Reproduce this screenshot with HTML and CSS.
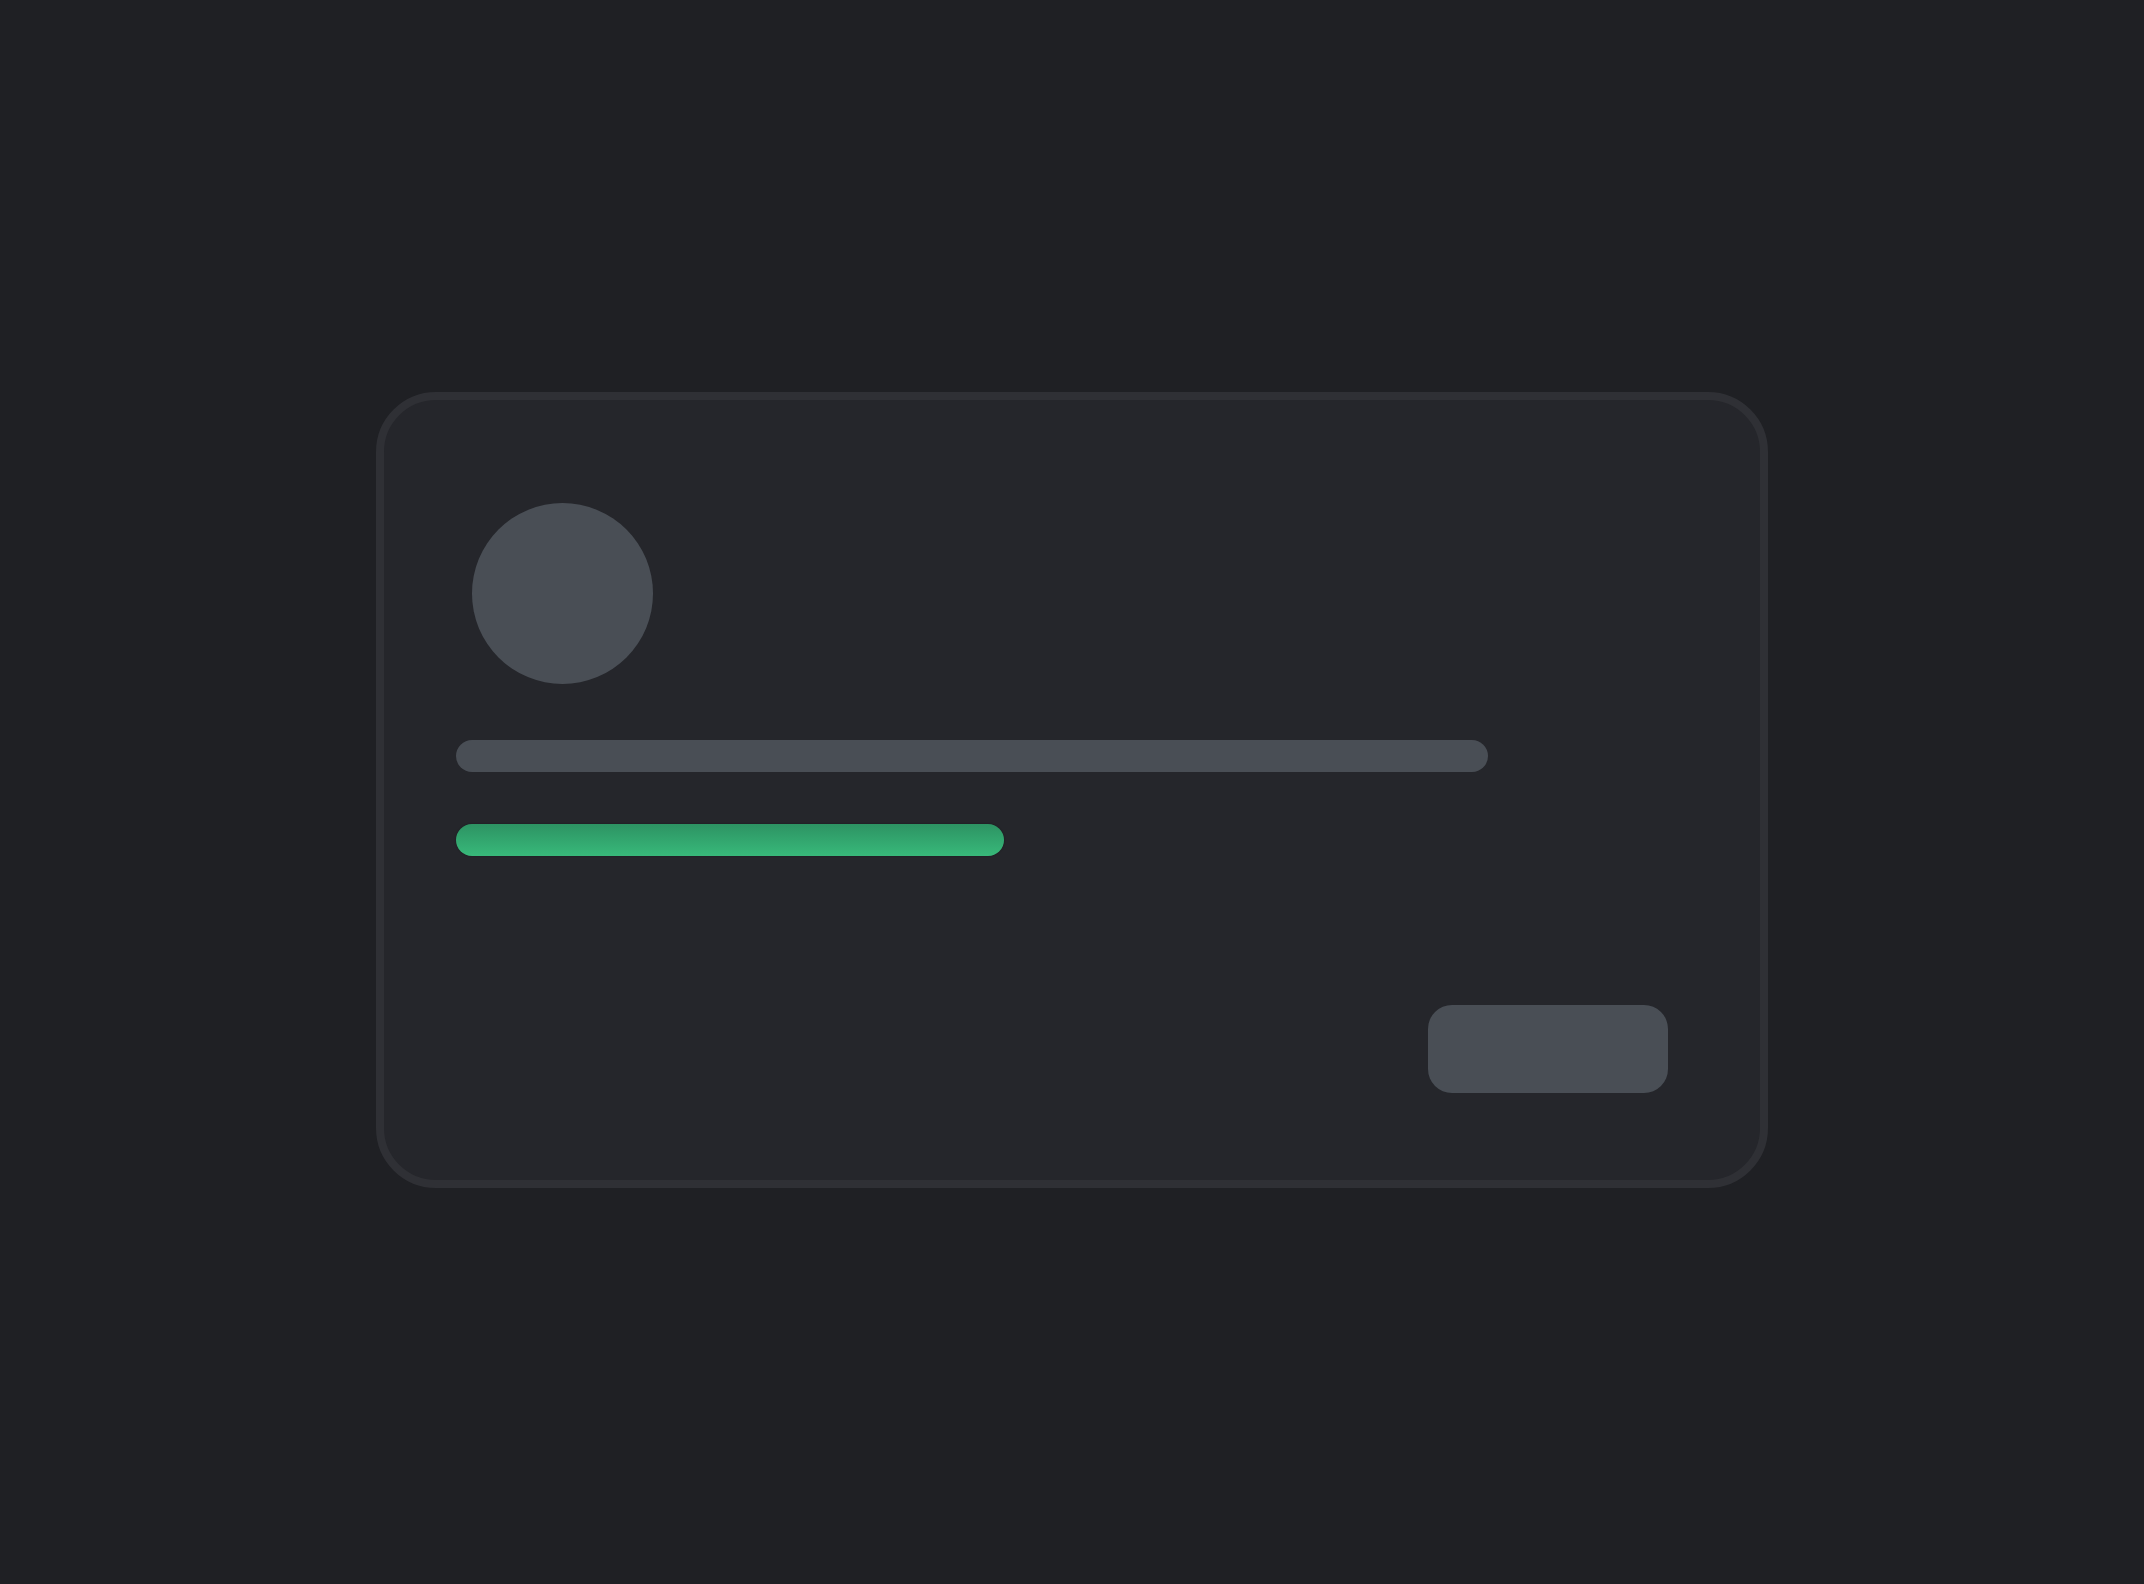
FILE: index.html
```html
<!DOCTYPE html>
<html lang="en">
<head>
    <meta charset="UTF-8">
    <meta name="viewport" content="width=device-width, initial-scale=1.0">
    <title>Loading card</title>
    <link rel="stylesheet" href="styles.css">
</head>
<body>

<div class="card">
    <div class="avatar"></div>
    <div class="line line-title"></div>
    <div class="line line-progress"></div>
    <div class="card-footer">
        <div class="btn-placeholder"></div>
    </div>
</div>

</body>
</html>
```

FILE: styles.css
```css
html, body {
    height: 100%;
}
body {
    margin: 0;
    background-color: #1f2024;
    font-family: "Liberation Sans", Arial, sans-serif;
    display: flex;
    align-items: center;
    justify-content: center;
}
.card {
    box-sizing: border-box;
    width: 1392px;
    height: 796px;
    margin-top: -5px;
    background-color: #25262b;
    border: 8px solid #2f3035;
    border-radius: 60px;
    padding: 103px 92px 87px 72px;
    display: flex;
    flex-direction: column;
}
.avatar {
    width: 181px;
    height: 181px;
    margin-left: 16px;
    border-radius: 50%;
    background-color: #494e55;
}
.line {
    height: 32px;
    border-radius: 16px;
}
.line-title {
    width: 1032px;
    margin-top: 56px;
    background-color: #494e55;
}
.line-progress {
    width: 548px;
    margin-top: 52px;
    background: linear-gradient(to bottom, #2d9363, #38b97a);
    box-shadow: 0 0 2px rgba(0, 0, 0, 0.35);
}
.card-footer {
    margin-top: auto;
    display: flex;
    justify-content: flex-end;
}
.btn-placeholder {
    width: 240px;
    height: 88px;
    border-radius: 24px;
    background-color: #494e55;
}
```
